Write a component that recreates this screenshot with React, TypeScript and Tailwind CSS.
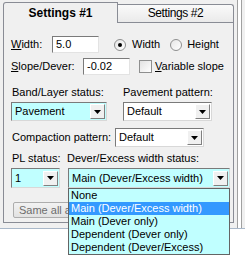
import React from "react";

const items = [
  "None",
  "Main (Dever/Excess width)",
  "Main (Dever only)",
  "Dependent (Dever only)",
  "Dependent (Dever/Excess)",
];

function Arrow() {
  return (
    <div className="mr-[1px] flex h-[15px] w-[15px] items-center justify-center border border-t-white border-l-white border-r-[#808080] border-b-[#808080] bg-[#F0F0F0]">
      <svg width="7" height="4" viewBox="0 0 7 4">
        <path d="M0 0h7L3.5 4z" fill="#000" />
      </svg>
    </div>
  );
}

function Combo({ className, value }: { className: string; value: string }) {
  return (
    <div
      className={`flex items-center border border-t-[#7A7A7A] border-l-[#7A7A7A] border-r-[#D8D8D8] border-b-[#D8D8D8] ${className}`}
    >
      <span className="flex-1 truncate pl-[3px] leading-none">{value}</span>
      <Arrow />
    </div>
  );
}

function Input({ className, value }: { className: string; value: string }) {
  return (
    <div
      className={`flex h-[17px] items-center border border-t-[#7A7A7A] border-l-[#7A7A7A] border-r-[#E3E3E3] border-b-[#E3E3E3] bg-white pl-[3px] leading-none ${className}`}
    >
      {value}
    </div>
  );
}

export default function App() {
  return (
    <div className="relative h-[259px] w-[245px] overflow-hidden bg-white font-['Liberation_Sans',Arial,sans-serif] text-[11px] text-black">
      <div className="flex h-[229px] border-b border-[#A9B8C9] bg-[#F0F0F0]">
        <div className="flex w-[235px] flex-col pl-[3px]">
          {/* tabs */}
          <div className="flex h-[22px] items-end">
            <div className="relative z-10 -mb-px flex h-[21px] w-[115px] items-center justify-center rounded-tl-[3px] border border-b-0 border-[#898C95] bg-[#F0F0F0] text-[12px] font-bold">
              Settings #1
            </div>
            <div className="flex h-[18px] w-[116px] items-center justify-center rounded-tr-[3px] border-t border-r border-[#898C95] bg-gradient-to-b from-[#FAFAFA] to-[#EAEAEA] pb-[1px] text-[12px] tracking-[-0.4px]">
              Settings #2
            </div>
          </div>

          {/* panel */}
          <div className="flex h-[201px] w-[231px] flex-col border border-[#898C95] bg-[#F0F0F0] pl-[7px]">
            <div className="mt-[13px] flex h-[17px] items-center">
              <span className="w-[41px]">
                <u>W</u>idth:
              </span>
              <Input className="w-[47px]" value="5.0" />
              <div className="ml-[15px] flex h-[12px] w-[12px] items-center justify-center rounded-full border border-[#8E8F8F] bg-gradient-to-br from-[#E6E6E6] to-white">
                <div className="h-[4px] w-[4px] rounded-full bg-black" />
              </div>
              <span className="ml-[6px]">Width</span>
              <div className="ml-[10px] h-[12px] w-[12px] rounded-full border border-[#8E8F8F] bg-gradient-to-br from-[#E6E6E6] to-white" />
              <span className="ml-[5px]">Height</span>
            </div>

            <div className="mt-[5px] flex h-[17px] items-center">
              <span className="w-[72px]">
                <u>S</u>lope/Dever:
              </span>
              <Input className="w-[47px]" value="-0.02" />
              <div className="ml-[9px] h-[13px] w-[13px] border border-[#8E8F8F] bg-gradient-to-br from-[#E2E2E2] to-white" />
              <span className="ml-[3px]">
                <u>V</u>ariable slope
              </span>
            </div>

            <div className="mt-[11px] flex h-[13px] items-center">
              <span className="w-[112px] pl-[1px]">Band/Layer status:</span>
              <span>Pavement pattern:</span>
            </div>

            <div className="mt-[3px] flex h-[19px] items-center">
              <Combo className="h-[19px] w-[96px] bg-[#C0FFFF]" value="Pavement" />
              <Combo className="ml-[16px] h-[19px] w-[89px] bg-white" value="Default" />
            </div>

            <div className="mt-[7px] flex h-[19px] items-center">
              <span className="w-[104px] pl-[1px]">Compaction pattern:</span>
              <Combo className="h-[19px] w-[89px] bg-white" value="Default" />
            </div>

            <div className="mt-[5px] flex h-[13px] items-center">
              <span className="w-[56px] pl-[1px]">PL status:</span>
              <span>Dever/Excess width status:</span>
            </div>

            <div className="mt-[3px] flex h-[20px] items-center">
              <Combo className="h-[20px] w-[49px] bg-[#C0FFFF]" value="1" />
              <Combo className="ml-[8px] h-[20px] w-[162px] bg-[#C0FFFF]" value="Main (Dever/Excess width)" />
            </div>

            <div className="ml-[2px] mt-[14px] flex h-[16px] w-[216px] items-center rounded-[2px] border border-[#ADADAD] bg-gradient-to-b from-[#F2F2F2] to-[#E2E2E2] pl-[5px] text-[#6D6D6D]">
              Same all as previous layer
            </div>
          </div>
        </div>

        {/* right frame */}
        <div className="ml-[2px] flex w-[8px]">
          <div className="w-px bg-[#A0A0A0]" />
          <div className="w-[3px] bg-white" />
          <div className="w-px bg-[#A0A0A0]" />
        </div>
      </div>

      {/* open drop-down list */}
      <div className="absolute left-[68px] top-[188px] w-[162px] border border-[#646464] bg-[#C0FFFF]">
        {items.map((t, i) => (
          <div
            key={t}
            className={`h-[13px] pl-[2px] leading-[13px] ${i === 1 ? "bg-[#3399FF] text-white" : ""}`}
          >
            {t}
          </div>
        ))}
      </div>
    </div>
  );
}
